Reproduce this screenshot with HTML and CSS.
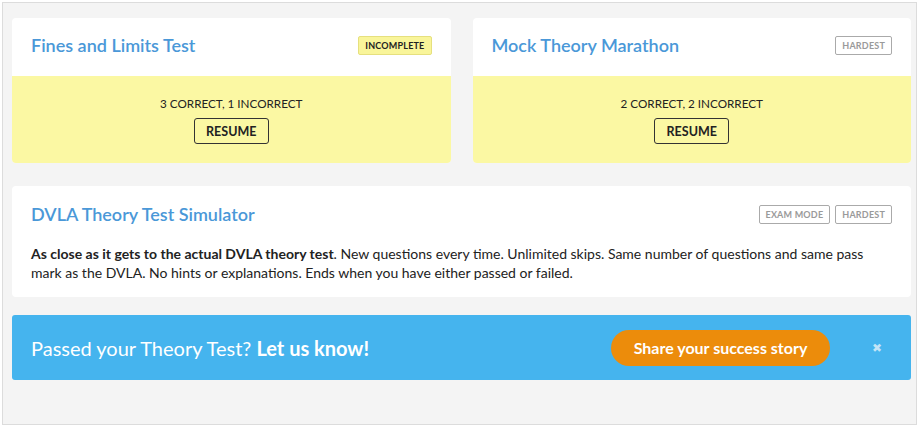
FILE: index.html
```html
<!DOCTYPE html>
<html>
<head>
<meta charset="utf-8">
<link rel="stylesheet" href="styles.css">
</head>
<body>
<div class="frame">
  <div class="row">
    <div class="card">
      <div class="card-head">
        <h2 class="title">Fines and Limits Test</h2>
        <div class="badges"><span class="badge badge-yellow">INCOMPLETE</span></div>
      </div>
      <div class="card-body">
        <div class="score">3 CORRECT, 1 INCORRECT</div>
        <button class="resume">RESUME</button>
      </div>
    </div>
    <div class="card">
      <div class="card-head">
        <h2 class="title">Mock Theory Marathon</h2>
        <div class="badges"><span class="badge">HARDEST</span></div>
      </div>
      <div class="card-body">
        <div class="score">2 CORRECT, 2 INCORRECT</div>
        <button class="resume">RESUME</button>
      </div>
    </div>
  </div>
  <div class="card wide">
    <div class="wide-head">
      <h2 class="title">DVLA Theory Test Simulator</h2>
      <div class="badges"><span class="badge">EXAM MODE</span><span class="badge">HARDEST</span></div>
    </div>
    <p class="desc"><strong>As close as it gets to the actual DVLA theory test</strong>. New questions every time. Unlimited skips. Same number of questions and same pass mark as the DVLA. No hints or explanations. Ends when you have either passed or failed.</p>
  </div>
  <div class="banner">
    <div class="banner-text">Passed your Theory Test? <strong>Let us know!</strong></div>
    <button class="share">Share your success story</button>
    <span class="close">✖</span>
  </div>
</div>
</body>
</html>
```
FILE: styles.css
```css
* { box-sizing: border-box; }
html, body { margin: 0; padding: 0; background: #ffffff; }
body { font-family: Lato, "Open Sans", sans-serif; color: #222; }
.frame {
  margin: 2px 3px 3px 2px;
  height: 423px;
  border: 1px solid #dcdcdc;
  background: #f4f4f4;
  padding: 15px 5px 0 9px;
  display: flex;
  flex-direction: column;
}
.row {
  display: grid;
  grid-template-columns: 1fr 1fr;
  gap: 22px;
}
.card {
  background: #fff;
  border-radius: 4px;
  overflow: hidden;
}
.card-head {
  height: 58px;
  display: flex;
  align-items: center;
  justify-content: space-between;
  padding: 0 19px 4px 19px;
}
.title {
  margin: 0;
  font-size: 18px;
  font-weight: 600;
  color: #4a98d8;
}
.badges { display: flex; gap: 5px; }
.badge {
  display: inline-block;
  font-size: 9px;
  font-weight: 700;
  letter-spacing: 0.2px;
  color: #9a9a9a;
  border: 1px solid #aaaaaa;
  border-radius: 2px;
  padding: 0 6px;
  height: 19px;
  line-height: 17px;
}
.badge-yellow {
  background: #f9f59a;
  border-color: #e6e07e;
  color: #222;
}
.card-body {
  height: 87px;
  background: #fbf8a3;
  display: flex;
  flex-direction: column;
  align-items: center;
  padding-top: 19px;
}
.score {
  font-size: 11.7px;
  line-height: 16px;
  color: #222;
}
.resume {
  margin-top: 7px;
  width: 75px;
  height: 26px;
  font-family: inherit;
  font-size: 12.5px;
  font-weight: 700;
  color: #222;
  background: transparent;
  border: 1.5px solid #333;
  border-radius: 3px;
  padding: 0;
}
.wide {
  margin-top: 23px;
  padding: 17px 19px 0 19px;
  height: 111px;
}
.wide-head {
  display: flex;
  justify-content: space-between;
  align-items: center;
  height: 22px;
}
.desc {
  margin: 19px 0 0 0;
  font-size: 14px;
  line-height: 19px;
  color: #222;
}
.desc strong { font-weight: 700; }
.banner {
  margin-top: 18px;
  height: 65px;
  background: #45b4ee;
  border-radius: 3px;
  display: flex;
  align-items: center;
  padding: 0 29px 0 19px;
}
.banner-text {
  flex: 1;
  color: #fff;
  font-size: 20px;
}
.banner-text strong { font-weight: 700; }
.share {
  width: 219px;
  height: 36px;
  border: none;
  border-radius: 18px;
  background: #ec8c0b;
  color: #fff;
  font-family: inherit;
  font-size: 16px;
  font-weight: 700;
  padding: 0;
}
.close {
  margin-left: 42px;
  color: #c3e4f7;
  font-size: 12px;
}
```
